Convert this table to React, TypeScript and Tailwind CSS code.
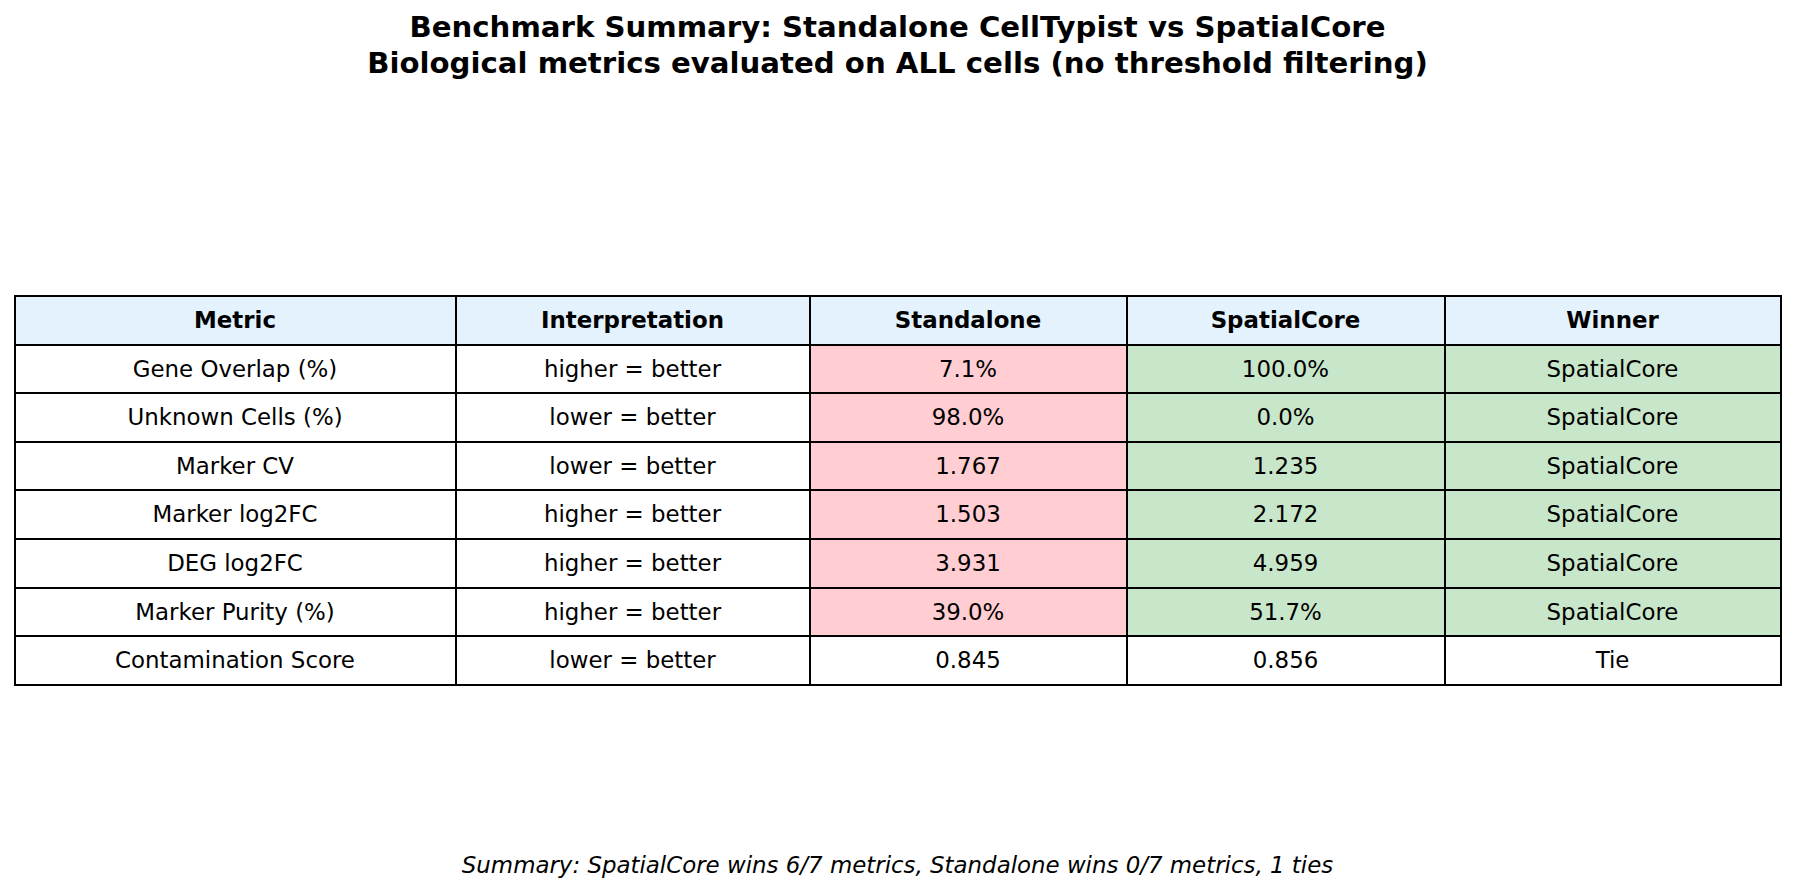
import React from 'react';

type Cell = 'plain' | 'lose' | 'win';

interface Row {
  metric: string;
  interp: string;
  standalone: string;
  spatial: string;
  winner: string;
  colored: boolean;
}

const rows: Row[] = [
  { metric: 'Gene Overlap (%)', interp: 'higher = better', standalone: '7.1%', spatial: '100.0%', winner: 'SpatialCore', colored: true },
  { metric: 'Unknown Cells (%)', interp: 'lower = better', standalone: '98.0%', spatial: '0.0%', winner: 'SpatialCore', colored: true },
  { metric: 'Marker CV', interp: 'lower = better', standalone: '1.767', spatial: '1.235', winner: 'SpatialCore', colored: true },
  { metric: 'Marker log2FC', interp: 'higher = better', standalone: '1.503', spatial: '2.172', winner: 'SpatialCore', colored: true },
  { metric: 'DEG log2FC', interp: 'higher = better', standalone: '3.931', spatial: '4.959', winner: 'SpatialCore', colored: true },
  { metric: 'Marker Purity (%)', interp: 'higher = better', standalone: '39.0%', spatial: '51.7%', winner: 'SpatialCore', colored: true },
  { metric: 'Contamination Score', interp: 'lower = better', standalone: '0.845', spatial: '0.856', winner: 'Tie', colored: false },
];

const headers = ['Metric', 'Interpretation', 'Standalone', 'SpatialCore', 'Winner'];

function Td({ children, tone = 'plain' }: { children: React.ReactNode; tone?: Cell }) {
  const bg = tone === 'lose' ? 'bg-[#ffcdd2]' : tone === 'win' ? 'bg-[#c8e6c9]' : 'bg-white';
  return <td className={`border-2 border-black text-center p-0 ${bg}`}>{children}</td>;
}

export default function App() {
  return (
    <div className="w-[1795px] h-[892px] bg-white text-black flex flex-col items-center font-['DejaVu_Sans',sans-serif]">
      {/* Title */}
      <div className="pt-[9px] text-center font-bold text-[29.2px] leading-[36px]">
        <div>Benchmark Summary: Standalone CellTypist vs SpatialCore</div>
        <div>Biological metrics evaluated on ALL cells (no threshold filtering)</div>
      </div>

      {/* Table */}
      <table className="mt-[214px] w-[1766px] table-fixed border-collapse text-[22.9px]">
        <colgroup>
          <col className="w-[441px]" />
          <col className="w-[354px]" />
          <col className="w-[317px]" />
          <col className="w-[318px]" />
          <col className="w-[336px]" />
        </colgroup>
        <thead>
          <tr className="h-[48.6px]">
            {headers.map((h) => (
              <th key={h} className="border-2 border-black bg-[#e3f2fd] font-bold text-center p-0">
                {h}
              </th>
            ))}
          </tr>
        </thead>
        <tbody>
          {rows.map((r) => (
            <tr key={r.metric} className="h-[48.6px]">
              <Td>{r.metric}</Td>
              <Td>{r.interp}</Td>
              <Td tone={r.colored ? 'lose' : 'plain'}>{r.standalone}</Td>
              <Td tone={r.colored ? 'win' : 'plain'}>{r.spatial}</Td>
              <Td tone={r.colored ? 'win' : 'plain'}>{r.winner}</Td>
            </tr>
          ))}
        </tbody>
      </table>

      {/* Footer summary */}
      <div className="mt-[165px] italic text-[22.9px] leading-[28px]">
        Summary: SpatialCore wins 6/7 metrics, Standalone wins 0/7 metrics, 1 ties
      </div>
    </div>
  );
}
